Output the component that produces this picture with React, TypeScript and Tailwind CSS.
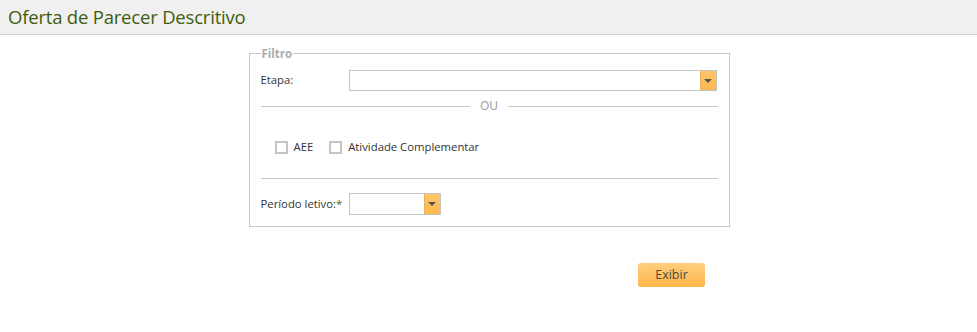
import React from 'react';

const font = { fontFamily: '"Open Sans", "Noto Sans", sans-serif' };

function Arrow() {
  return (
    <div className="w-[16px] h-full bg-gradient-to-b from-[#ffc56b] to-[#ffb84d] flex items-center justify-center border-l border-[#e8b060]">
      <div className="w-0 h-0 border-l-[4px] border-r-[4px] border-t-[4px] border-l-transparent border-r-transparent border-t-[#555]" />
    </div>
  );
}

export default function App() {
  return (
    <div className="w-[977px] h-[332px] bg-white text-[11.3px] text-[#333]" style={font}>
      <div className="h-[35px] bg-[#f0f0f0] border-b border-[#d2d2d2] flex items-center pl-[8px]">
        <h1 className="text-[18.5px] text-[#3f5d0f] tracking-[-0.2px]">Oferta de Parecer Descritivo</h1>
      </div>

      <div className="flex justify-center mt-[10px]">
        <fieldset className="w-[481px] h-[182px] border border-[#c8c8c8] px-[11px] pt-[2px] ml-[1px]">
          <legend className="px-[1px] text-[#adadad] font-bold text-[11.5px]">Filtro</legend>

          <div className="flex items-center h-[21px] mt-[6px]">
            <label className="w-[88px] text-[#333]">Etapa:</label>
            <div className="flex h-[21px] w-[368px] border border-[#c4c4c4] bg-white">
              <div className="flex-1" />
              <Arrow />
            </div>
          </div>

          <div className="flex items-center mt-[4px] h-[22px]">
            <div className="flex-1 h-px bg-[#c8c8c8]" />
            <span className="px-[10px] text-[#949ca4] text-[12px]">OU</span>
            <div className="flex-1 h-px bg-[#c8c8c8]" />
          </div>

          <div className="flex items-center mt-[22px] pl-[14px] h-[16px]">
            <div className="w-[13px] h-[13px] border-2 border-[#c4c4c4] bg-white" />
            <span className="ml-[6px]">AEE</span>
            <div className="ml-[16px] w-[13px] h-[13px] border-2 border-[#c4c4c4] bg-white" />
            <span className="ml-[6px]">Atividade Complementar</span>
          </div>

          <div className="h-px bg-[#c8c8c8] mt-[23px]" />

          <div className="flex items-center mt-[14px] h-[22px]">
            <label className="w-[88px] whitespace-nowrap">
              Período letivo:<span className="text-[#3a6a2a]">*</span>
            </label>
            <div className="flex h-[22px] w-[92px] border border-[#c4c4c4] bg-white">
              <div className="flex-1" />
              <Arrow />
            </div>
          </div>
        </fieldset>
      </div>

      <div className="flex justify-center mt-[36px] pl-[366px]">
        <button className="w-[67px] h-[24px] rounded-[3px] bg-gradient-to-b from-[#ffcf7d] to-[#ffb548] text-[#4a4a3a] text-[12.5px]">
          Exibir
        </button>
      </div>
    </div>
  );
}
